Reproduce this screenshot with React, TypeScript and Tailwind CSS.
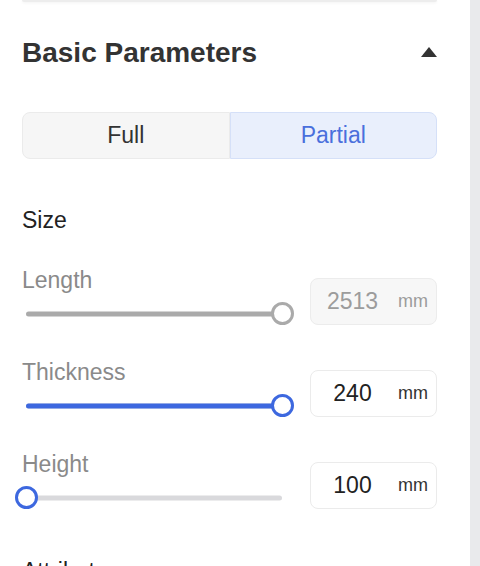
import { useState } from "react";

type SliderTone = "disabled" | "active";

const ROWS = [
  { id: "length", label: "Length", value: 2513, min: 0, max: 2513, disabled: true },
  { id: "thickness", label: "Thickness", value: 240, min: 0, max: 240, disabled: false },
  { id: "height", label: "Height", value: 100, min: 100, max: 3000, disabled: false },
];

const Slider = ({
  pct,
  tone,
}: {
  pct: number;
  tone: SliderTone;
}) => {
  const disabled = tone === "disabled";
  return (
    <div className="relative ml-[4px] mt-[8px] h-[23px] w-[256px]">
      {/* track */}
      <div
        className={`absolute left-0 right-0 top-1/2 h-[5px] -translate-y-1/2 rounded-full ${
          disabled ? "bg-[#aaaaaa]" : "bg-[#d9d9dc]"
        }`}
      />
      {/* filled part */}
      {!disabled && (
        <div
          className="absolute left-0 top-1/2 h-[5px] -translate-y-1/2 rounded-full bg-[#3d68df]"
          style={{ width: `${pct * 256}px` }}
        />
      )}
      {/* thumb */}
      <div
        className={`absolute top-0 h-[23px] w-[23px] rounded-full border-[3px] bg-white ${
          disabled ? "border-[#aaaaaa]" : "border-[#3d68df]"
        }`}
        style={{ left: `${pct * 256 - 11.5}px` }}
      />
    </div>
  );
};

const NumberBox = ({ value, disabled }: { value: number; disabled: boolean }) => (
  <div
    className={`flex h-[47px] w-[127px] shrink-0 items-center rounded-[8px] border ${
      disabled ? "border-[#ececec] bg-[#f7f7f7]" : "border-[#ebebeb] bg-white"
    }`}
  >
    <input
      readOnly
      value={value}
      disabled={disabled}
      className={`w-[83px] bg-transparent text-center text-[23px] outline-none ${
        disabled ? "text-[#9c9c9c]" : "text-[#222222]"
      }`}
    />
    <span className={`ml-[4px] text-[18px] ${disabled ? "text-[#9c9c9c]" : "text-[#333333]"}`}>
      mm
    </span>
  </div>
);

export default function App() {
  const [mode, setMode] = useState<"full" | "partial">("partial");

  return (
    <div
      className="flex h-[566px] w-[480px] overflow-hidden bg-white"
      style={{ fontFamily: '"Liberation Sans", Arial, sans-serif' }}
    >
      <div className="w-[470px] shrink-0 pl-[22px] pr-[33px]">
        {/* bottom edge of the card above */}
        <div className="h-[2px] w-full rounded-b bg-[#ededed] shadow-[0_1px_3px_rgba(0,0,0,0.06)]" />

        {/* section header */}
        <div className="mt-[34px] flex h-[34px] items-center justify-between">
          <h2 className="text-[28px] font-bold leading-[34px] text-[#333333]">Basic Parameters</h2>
          <svg width="16" height="10" viewBox="0 0 16 10" className="-mt-[2px]">
            <path d="M8 0 L16 10 L0 10 Z" fill="#333333" />
          </svg>
        </div>

        {/* mode toggle */}
        <div className="mt-[42px] grid h-[47px] grid-cols-2">
          <button
            onClick={() => setMode("full")}
            className={`rounded-l-[8px] border text-[23px] ${
              mode === "full"
                ? "border-[#d5e0f8] bg-[#e9effc] text-[#4a6fdc]"
                : "border-[#ebebeb] bg-[#f6f6f6] text-[#333333]"
            }`}
          >
            Full
          </button>
          <button
            onClick={() => setMode("partial")}
            className={`rounded-r-[8px] border text-[23px] ${
              mode === "partial"
                ? "border-[#d5e0f8] bg-[#e9effc] text-[#4a6fdc]"
                : "border-[#ebebeb] bg-[#f6f6f6] text-[#333333]"
            }`}
          >
            Partial
          </button>
        </div>

        <div className="mt-[47px] text-[23px] leading-[28px] text-[#222222]">Size</div>

        <div className="mt-[32px] flex flex-col gap-[33px]">
          {ROWS.map((row) => {
            const pct = (row.value - row.min) / (row.max - row.min);
            return (
              <div key={row.id} className="flex items-end justify-between">
                <div>
                  <div className="text-[23px] leading-[28px] text-[#8a8a8a]">{row.label}</div>
                  <Slider pct={pct} tone={row.disabled ? "disabled" : "active"} />
                </div>
                <NumberBox value={row.value} disabled={row.disabled} />
              </div>
            );
          })}
        </div>

        <div className="mt-[48px] text-[23px] font-medium leading-[28px] text-[#222222]">
          Attributes
        </div>
      </div>
      <div className="flex-1 bg-[#e9eaec]" />
    </div>
  );
}
